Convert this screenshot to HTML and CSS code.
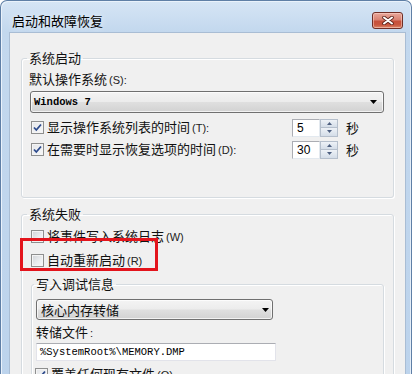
FILE: index.html
```html
<!DOCTYPE html>
<html lang="zh-CN">
<head>
<meta charset="utf-8">
<title>启动和故障恢复</title>
<link rel="stylesheet" href="styles.css">
</head>
<body>
<div class="window">
  <div class="titlebar">
    <span class="title">启动和故障恢复</span>
    <span class="close">
      <svg width="12" height="9" viewBox="0 0 12 9"><path d="M2 1.5 L10 7.5 M10 1.5 L2 7.5" stroke="#5b2219" stroke-width="3.6" stroke-linecap="round"/><path d="M2 1.5 L10 7.5 M10 1.5 L2 7.5" stroke="#ffffff" stroke-width="2" stroke-linecap="round"/></svg>
    </span>
  </div>
  <div class="content">
    <fieldset class="group group-start">
      <legend>系统启动</legend>
      <div class="label-line">默认操作系统<span class="acc">(S):</span></div>
      <div class="combo combo-os">
        <span class="mono bold">Windows 7</span>
        <svg class="arrow" width="7" height="4" viewBox="0 0 7 4"><path d="M0 0 H7 L3.5 4 Z" fill="#000"/></svg>
      </div>
      <div class="row first-row">
        <span class="check checked"><svg width="11" height="11" viewBox="0 0 11 11"><path d="M2 5.5 L4.3 8 L9 2.5" fill="none" stroke="#2c4a8c" stroke-width="1.8"/></svg></span>
        <span class="row-label">显示操作系统列表的时间<span class="acc">(T):</span></span>
        <span class="spin"><span class="spin-input">5</span><span class="spin-btns"><span class="sb"><svg width="5" height="3" viewBox="0 0 5 3"><path d="M0 3 L2.5 0 L5 3 Z" fill="#4d5f80"/></svg></span><span class="sb"><svg width="5" height="3" viewBox="0 0 5 3"><path d="M0 0 L2.5 3 L5 0 Z" fill="#4d5f80"/></svg></span></span></span>
        <span class="unit">秒</span>
      </div>
      <div class="row">
        <span class="check checked"><svg width="11" height="11" viewBox="0 0 11 11"><path d="M2 5.5 L4.3 8 L9 2.5" fill="none" stroke="#2c4a8c" stroke-width="1.8"/></svg></span>
        <span class="row-label">在需要时显示恢复选项的时间<span class="acc">(D):</span></span>
        <span class="spin"><span class="spin-input">30</span><span class="spin-btns"><span class="sb"><svg width="5" height="3" viewBox="0 0 5 3"><path d="M0 3 L2.5 0 L5 3 Z" fill="#4d5f80"/></svg></span><span class="sb"><svg width="5" height="3" viewBox="0 0 5 3"><path d="M0 0 L2.5 3 L5 0 Z" fill="#4d5f80"/></svg></span></span></span>
        <span class="unit">秒</span>
      </div>
    </fieldset>

    <fieldset class="group group-fail">
      <legend>系统失败</legend>
      <div class="row first-row">
        <span class="check"></span>
        <span class="row-text">将事件写入系统日志<span class="acc">(W)</span></span>
      </div>
      <div class="row first-row">
        <span class="check"></span>
        <span class="row-text">自动重新启动<span class="acc">(R)</span></span>
      </div>
      <fieldset class="group inner">
        <legend>写入调试信息</legend>
        <div class="combo combo-dump">
          <span>核心内存转储</span>
          <svg class="arrow" width="7" height="4" viewBox="0 0 7 4"><path d="M0 0 H7 L3.5 4 Z" fill="#000"/></svg>
        </div>
        <div class="label-line dump-label">转储文件<span class="acc">:</span></div>
        <div class="textbox"><span class="mono">%SystemRoot%\MEMORY.DMP</span></div>
        <div class="row last-row">
          <span class="check checked"><svg width="11" height="11" viewBox="0 0 11 11"><path d="M2 5.5 L4.3 8 L9 2.5" fill="none" stroke="#2c4a8c" stroke-width="1.8"/></svg></span>
          <span class="row-text">覆盖任何现有文件<span class="acc">(O)</span></span>
        </div>
      </fieldset>
    </fieldset>

    <div class="highlight"></div>
  </div>
</div>
</body>
</html>
```

FILE: styles.css
```css
html, body {
  margin: 0;
  padding: 0;
  height: 374px;
  overflow: hidden;
  background: #ffffff;
}

body {
  font-family: "Noto Sans CJK SC", "Noto Sans", sans-serif;
  font-size: 13px;
  color: #111;
}

.window {
  width: 412px;
  height: 400px;
  box-sizing: border-box;
  border: 1px solid #5f7fa6;
  border-bottom: none;
  border-radius: 7px 7px 0 0;
  background: linear-gradient(to bottom, #d6e5f5 0px, #c3d8ee 30px, #bcd3ec 100%);
  box-shadow: inset 1px 1px 0 #eaf2fb, inset -1px 0 0 #e3edf8;
  padding: 0 5px 0 8px;
  display: flex;
  flex-direction: column;
}

.titlebar {
  height: 31px;
  flex: none;
  display: flex;
  align-items: flex-start;
  justify-content: space-between;
}

.title {
  margin-top: 12px;
  margin-left: 3px;
  line-height: 16px;
  font-size: 13px;
  color: #000;
  text-shadow: 0 0 6px rgba(255, 255, 255, 0.9);
}

.close {
  margin-top: 11px;
  margin-right: 3px;
  width: 31px;
  height: 17px;
  box-sizing: border-box;
  border: 1px solid #6f2e26;
  border-radius: 3px;
  background: linear-gradient(to bottom, #e9a89b 0%, #d98373 45%, #c7503b 55%, #c9573f 80%, #dc8a6c 100%);
  box-shadow: inset 0 0 0 1px rgba(255, 220, 210, 0.5);
  display: flex;
  align-items: center;
  justify-content: center;
}

.content {
  position: relative;
  flex: 1;
  background: #f0f0f0;
  border: 1px solid #a9bdd4;
  padding: 0 11px;
  overflow: hidden;
}

.group {
  margin: 0;
  border: 1px solid #d5dbe0;
  border-radius: 3px;
  box-shadow: inset 1px 1px 0 #ffffff, 1px 1px 0 #ffffff;
  padding: 0 9px 0 7px;
  min-width: 0;
}

.group legend {
  margin-left: -2px;
  padding: 0 2px;
  line-height: 16px;
  font-size: 13px;
  color: #111;
}

.group-start {
  margin-top: 17px;
  padding-bottom: 38px;
}

.group-fail {
  margin-top: 8px;
}

.label-line {
  margin-top: 5px;
  height: 16px;
  line-height: 16px;
}

.acc {
  font-family: "Liberation Sans", sans-serif;
  font-size: 11px;
  margin-left: 2px;
  color: #222;
}

.combo {
  box-sizing: border-box;
  border: 1px solid #707070;
  border-radius: 3px;
  background: linear-gradient(to bottom, #f4f4f4 0%, #ececec 48%, #dfdfdf 52%, #d2d2d2 100%);
  box-shadow: inset 0 0 0 1px rgba(255, 255, 255, 0.7);
  display: flex;
  align-items: center;
  justify-content: space-between;
}

.combo-os {
  margin-top: 4px;
  margin-left: 1px;
  width: 354px;
  height: 22px;
  padding: 0 6px 0 3px;
}

.combo-dump {
  margin-top: 7px;
  width: 237px;
  height: 21px;
  padding: 0 3px 0 4px;
  line-height: 16px;
}

.mono {
  font-family: "Liberation Mono", monospace;
  font-size: 10.5px;
  color: #000;
}

.bold {
  font-weight: bold;
}

.row {
  display: flex;
  align-items: center;
  height: 19px;
  margin-top: 3px;
}

.first-row {
  margin-top: 5px;
}

.check {
  flex: none;
  width: 13px;
  height: 13px;
  box-sizing: border-box;
  margin-left: 2px;
  margin-right: 3px;
  border: 1px solid #8e8f8f;
  background: linear-gradient(135deg, #d0d3d7 0%, #eceef0 60%, #f7f7f7 100%);
  box-shadow: inset 0 0 0 1px #f4f4f4;
  display: flex;
  align-items: center;
  justify-content: center;
}

.check.checked {
  background: linear-gradient(135deg, #e4e6e9 0%, #f7f8f9 100%);
}

.row-label {
  width: 245px;
  flex: none;
  line-height: 16px;
  white-space: nowrap;
}

.row-text {
  line-height: 16px;
  white-space: nowrap;
}

.spin {
  display: flex;
  height: 18px;
}

.spin-input {
  width: 28px;
  box-sizing: border-box;
  border: 1px solid #abadb3;
  border-right-color: #e3e9ef;
  border-bottom-color: #e3e9ef;
  background: #fff;
  font-family: "Liberation Sans", sans-serif;
  font-size: 12px;
  line-height: 16px;
  padding-left: 4px;
  color: #000;
}

.spin-btns {
  width: 18px;
  display: flex;
  flex-direction: column;
}

.sb {
  flex: 1;
  box-sizing: border-box;
  border: 1px solid #b5bfcc;
  background: linear-gradient(to bottom, #eef2f7, #d4dde8);
  display: flex;
  align-items: center;
  justify-content: center;
}

.sb + .sb {
  border-top: none;
}

.unit {
  margin-left: 8px;
  line-height: 16px;
}

.inner {
  margin-top: 6px;
  margin-left: 2px;
  padding: 0 0 0 4px;
}

.dump-label {
  margin-top: 4px;
}

.textbox {
  margin-top: 3px;
  width: 240px;
  height: 18px;
  box-sizing: border-box;
  border: 1px solid #e2e3ea;
  border-top-color: #abadb3;
  background: #fff;
  padding-left: 3px;
  display: flex;
  align-items: center;
}

.last-row {
  margin-top: 4px;
}

.last-row .check {
  margin-left: -1px;
}

.highlight {
  position: absolute;
  left: 10px;
  top: 205px;
  width: 138px;
  height: 33px;
  box-sizing: border-box;
  border: 3px solid #e3141c;
}
```
